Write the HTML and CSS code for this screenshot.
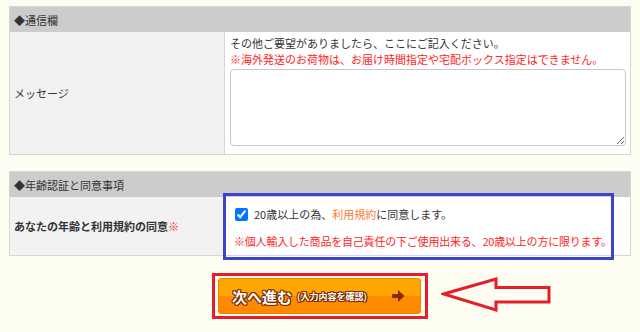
FILE: index.html
```html
<!DOCTYPE html>
<html lang="ja">
<head>
  <meta charset="UTF-8">
  <title>注文フォーム</title>
  <link rel="stylesheet" href="styles.css">
</head>
<body>
  <table class="form-table">
    <tr>
      <th colspan="2" class="section-head">◆通信欄</th>
    </tr>
    <tr>
      <td class="label">メッセージ</td>
      <td class="field">
        <p class="note">その他ご要望がありましたら、ここにご記入ください。</p>
        <p class="note warn">※海外発送のお荷物は、お届け時間指定や宅配ボックス指定はできません。</p>
        <textarea class="message"></textarea>
      </td>
    </tr>
  </table>

  <table class="form-table agree-table">
    <tr>
      <th colspan="2" class="section-head">◆年齢認証と同意事項</th>
    </tr>
    <tr>
      <td class="label strong">あなたの年齢と利用規約の同意<span class="req">※</span></td>
      <td class="field agree-cell">
        <div class="agree-box">
          <label class="agree-line"><input type="checkbox" checked> 20歳以上の為、<span class="terms">利用規約</span>に同意します。</label>
          <p class="note warn">※個人輸入した商品を自己責任の下ご使用出来る、20歳以上の方に限ります。</p>
        </div>
      </td>
    </tr>
  </table>

  <div class="next-row">
    <div class="next-frame">
      <button class="next-btn">
        <span class="next-main">次へ進む</span>
        <span class="next-sub">(入力内容を確認)</span>
        <svg class="next-arrow" width="13" height="14" viewBox="0 0 13 14">
          <path d="M0 5 H6 V1 L12.5 7 L6 13 V9 H0 Z" fill="#8a2a00"/>
        </svg>
      </button>
    </div>
    <svg class="pointer" width="112" height="36" viewBox="0 0 112 36">
      <path d="M2.5 17 L55 2 V10.5 H108 V25 H55 V33 Z" fill="none" stroke="#e61e2a" stroke-width="3"/>
    </svg>
  </div>
</body>
</html>
```

FILE: styles.css
```css
body {
  margin: 0;
  padding: 6px 9px 0 9px;
  background: #fdfdf1;
  color: #333;
  font-family: "Noto Sans CJK JP", "Noto Sans", sans-serif;
  font-size: 11px;
}

.form-table {
  width: 622px;
  border-collapse: collapse;
  border: 1px solid #d6d6d6;
}

.agree-table {
  margin-top: 16px;
}

.section-head {
  background: #cccccc;
  text-align: left;
  font-weight: normal;
  height: 25px;
  padding: 0 0 0 4px;
  font-size: 11px;
}

.label {
  width: 206px;
  background: #f2f2f2;
  border-right: 1px solid #d6d6d6;
  padding: 0 4px;
  vertical-align: middle;
}

.label.strong {
  font-weight: bold;
}

.req {
  color: #ff2a2a;
}

.field {
  background: #fff;
  padding: 3px 4px 8px 5px;
  vertical-align: top;
}

.note {
  margin: 0;
  line-height: 16px;
}

.warn {
  color: #ff2424;
}

.message {
  display: block;
  box-sizing: border-box;
  width: 396px;
  height: 77px;
  margin-top: 2px;
  border: 1px solid #c8c8c8;
  border-radius: 4px;
  resize: vertical;
}

.agree-cell {
  position: relative;
  height: 58px;
  padding: 0;
}

.agree-box {
  position: absolute;
  left: -2px;
  top: -4px;
  width: 377px;
  height: 61px;
  border: 3px solid #3b45cc;
  padding: 0 0 0 8px;
}

.agree-line {
  display: flex;
  align-items: center;
  height: 30px;
  margin-top: 3px;
}

.agree-line input {
  width: 13px;
  height: 13px;
  margin: 0 6px 0 1px;
}

.terms {
  color: #ff7a33;
}

.agree-box .warn {
  margin-top: 4px;
  white-space: nowrap;
  letter-spacing: -0.2px;
}

.next-row {
  position: relative;
  display: flex;
  justify-content: center;
  margin-top: 17px;
}

.next-frame {
  border: 3px solid #e61e2a;
  padding: 2px 4px 2px 3px;
}

.next-btn {
  display: flex;
  align-items: center;
  width: 203px;
  height: 36px;
  padding: 0 0 0 13px;
  border: 1px solid #f08000;
  border-radius: 3px;
  background: linear-gradient(to bottom, #ffa600 0%, #ffa600 50%, #ff8a00 50%, #ff8a00 100%);
  color: #fff;
  font-family: "Noto Sans CJK JP", sans-serif;
  font-weight: bold;
  text-shadow: 1px 0 0 #7a2c00, -1px 0 0 #7a2c00, 0 1px 0 #7a2c00, 0 -1px 0 #7a2c00, 1px 1px 0 #7a2c00, -1px -1px 0 #7a2c00, 1px -1px 0 #7a2c00, -1px 1px 0 #7a2c00;
}

.next-main {
  font-size: 15px;
}

.next-sub {
  font-size: 9px;
  margin-left: 5px;
}

.next-arrow {
  margin-left: 25px;
}

.pointer {
  position: absolute;
  left: 432px;
  top: 4px;
}
```
